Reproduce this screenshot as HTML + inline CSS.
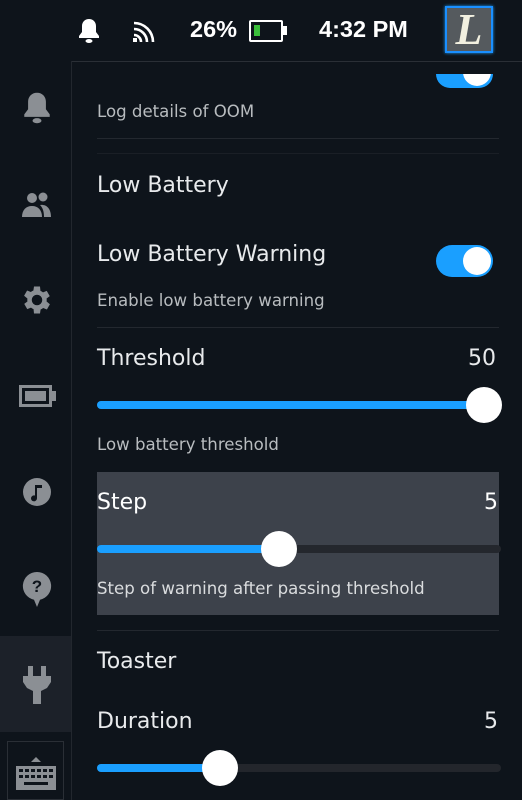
<!DOCTYPE html>
<html><head><meta charset="utf-8"><style>
*{margin:0;padding:0;box-sizing:border-box}
body{width:522px;height:800px;background:#0e141b;position:relative;overflow:hidden;font-family:"DejaVu Sans","Liberation Sans",sans-serif;color:#e6e8ea}
.a{position:absolute}
.t{font-size:22px;color:#e8eaec}
.d{font-size:16.6px;color:#b8bcbf}
.sep{position:absolute;left:97px;width:402px;height:1px;background:#23282f}
.track{position:absolute;left:97px;width:404px;height:8px;border-radius:4px;background:#23262c}
.fill{position:absolute;left:0;top:0;height:8px;border-radius:4px;background:#1a9fff}
.knob{position:absolute;width:36px;height:36px;border-radius:50%;background:#fff;top:-14px}
</style></head><body>
<svg class="a" style="left:78px;top:18px" width="22" height="26" viewBox="0 0 22 26"><path d="M11 1c-4 0-7 3-7 7v6l-3 4v2h20v-2l-3-4V8c0-4-3-7-7-7z" fill="#fff"/><ellipse cx="11" cy="23" rx="3.5" ry="2" fill="#fff"/></svg>
<svg class="a" style="left:133px;top:19px" width="25" height="24" viewBox="0 0 25 24"><g fill="none" stroke="#fff" stroke-width="2.6"><path d="M1 4a19 19 0 0 1 19 19"/><path d="M1 10a13 13 0 0 1 13 13"/><path d="M1 16a7 7 0 0 1 7 7"/></g><rect x="0" y="19" width="4" height="4" fill="#fff"/></svg>
<div class="a" style="left:190px;top:16px;font-size:23.5px;color:#fff;font-family:'Liberation Sans',sans-serif;font-weight:bold">26%</div>
<div class="a" style="left:249px;top:20px;width:34px;height:22px;border:2.5px solid #fff;border-radius:2px"><div style="position:absolute;left:3px;top:3px;width:6px;height:11px;background:#3bbf3b"></div></div>
<div class="a" style="left:283px;top:26px;width:4px;height:9px;background:#fff"></div>
<div class="a" style="left:319px;top:16px;font-size:23.5px;color:#fff;font-family:'Liberation Sans',sans-serif;font-weight:bold">4:32 PM</div>
<div class="a" style="left:445px;top:6px;width:48px;height:47px;background:#555a5e;border:2px solid #1a8fff;box-shadow:0 0 3px #1a9fff"><div style="font-family:'Liberation Serif',serif;font-size:44px;font-weight:bold;font-style:italic;color:#f2f0e0;text-align:center;line-height:44px">L</div></div>
<div class="a" style="left:72px;top:61px;width:450px;height:1px;background:#2a2f36"></div>
<div class="a" style="left:71px;top:61px;width:1px;height:739px;background:#22272e"></div>
<div class="a" style="left:0;top:636px;width:71px;height:96px;background:#1c2129"></div>
<div class="a" style="left:7px;top:741px;width:57px;height:59px;border:1px solid #2a2f36"></div>
<svg class="a" style="left:23px;top:91px" width="28" height="34" viewBox="0 0 22 26"><path d="M11 1c-4 0-7 3-7 7v6l-3 4v2h20v-2l-3-4V8c0-4-3-7-7-7z" fill="#8b8f94"/><ellipse cx="11" cy="23" rx="3.5" ry="2" fill="#8b8f94"/></svg>
<svg class="a" style="left:21px;top:190px" width="32" height="28" viewBox="0 0 32 28"><g fill="#8b8f94"><circle cx="11" cy="8" r="5"/><circle cx="22" cy="7" r="4.5"/><path d="M1 27c0-7 4-11 10-11s10 4 10 11z"/><path d="M19 15c6-1 11 3 11 12h-7c0-5-1-9-4-12z"/></g></svg>
<svg class="a" style="left:19px;top:282px" width="36" height="36" viewBox="0 0 24 24"><path fill="#8b8f94" d="M19.4 13a7.5 7.5 0 0 0 0-2l2.1-1.6-2-3.5-2.5 1a7 7 0 0 0-1.7-1L15 3h-4l-.4 2.7a7 7 0 0 0-1.7 1l-2.5-1-2 3.5L6.6 11a7.5 7.5 0 0 0 0 2l-2.1 1.6 2 3.5 2.5-1a7 7 0 0 0 1.7 1L11 21h4l.4-2.7a7 7 0 0 0 1.7-1l2.5 1 2-3.5zM13 15.5a3.5 3.5 0 1 1 0-7 3.5 3.5 0 0 1 0 7z" transform="translate(-1 0)"/></svg>
<div class="a" style="left:19px;top:385px;width:33px;height:22px;border:3px solid #8b8f94"><div style="margin:3px;height:10px;background:#8b8f94"></div></div>
<div class="a" style="left:52px;top:391px;width:4px;height:10px;background:#8b8f94"></div>
<svg class="a" style="left:22px;top:477px" width="30" height="30" viewBox="0 0 30 30"><circle cx="15" cy="15" r="14" fill="#8b8f94"/><path d="M13 8v10.5a3 3 0 1 0 2 2.8V11h5V8z" fill="#0e141b"/></svg>
<svg class="a" style="left:22px;top:571px" width="30" height="38" viewBox="0 0 30 38"><path d="M15 1a14 14 0 0 0-3 27.7L15 36l3-7.3A14 14 0 0 0 15 1z" fill="#8b8f94"/><text x="15" y="21" font-size="17" font-weight="bold" text-anchor="middle" fill="#0e141b" font-family="Liberation Sans">?</text></svg>
<svg class="a" style="left:23px;top:666px" width="28" height="38" viewBox="0 0 28 38"><g fill="#8b8f94"><rect x="5" y="0" width="5" height="10"/><rect x="18" y="0" width="5" height="10"/><path d="M0 10h28v6l-4 6-6 3v13h-8V25l-6-3-4-6z"/></g></svg>
<svg class="a" style="left:16px;top:756px" width="40" height="34" viewBox="0 0 40 34"><path d="M15 6l5-5 5 5z" fill="#8b8f94"/><rect x="0" y="10" width="40" height="24" fill="#8b8f94"/><g fill="#0e141b"><rect x="3" y="13" width="4" height="3"/><rect x="9" y="13" width="4" height="3"/><rect x="15" y="13" width="4" height="3"/><rect x="21" y="13" width="4" height="3"/><rect x="27" y="13" width="4" height="3"/><rect x="33" y="13" width="4" height="3"/><rect x="3" y="19" width="4" height="3"/><rect x="9" y="19" width="4" height="3"/><rect x="15" y="19" width="4" height="3"/><rect x="21" y="19" width="4" height="3"/><rect x="27" y="19" width="4" height="3"/><rect x="33" y="19" width="4" height="3"/><rect x="8" y="26" width="24" height="3"/></g></svg>
<div class="a" style="left:436px;top:62px;width:57px;height:26px;border-radius:0 0 14px 14px;background:#1a9fff;overflow:hidden;clip-path:inset(12px 0 0 0)"><div style="position:absolute;right:2px;top:-4px;width:28px;height:28px;border-radius:50%;background:#fff"></div></div>
<div class="a d" style="left:97px;top:102px">Log details of OOM</div>
<div class="sep" style="top:138px"></div>
<div class="sep" style="top:153px;background:#1a1f26"></div>
<div class="a t" style="left:97px;top:173px">Low Battery</div>
<div class="a t" style="left:97px;top:242px">Low Battery Warning</div>
<div class="a" style="left:436px;top:245px;width:57px;height:32px;border-radius:16px;background:#1a9fff"><div style="position:absolute;right:2px;top:2px;width:28px;height:28px;border-radius:50%;background:#fff"></div></div>
<div class="a d" style="left:97px;top:291px">Enable low battery warning</div>
<div class="sep" style="top:327px"></div>
<div class="a t" style="left:97px;top:346px">Threshold</div>
<div class="a t" style="left:468px;top:346px">50</div>
<div class="track" style="top:401px"><div class="fill" style="width:387px"></div><div class="knob" style="left:369px"></div></div>
<div class="a d" style="left:97px;top:435px">Low battery threshold</div>
<div class="a" style="left:97px;top:472px;width:402px;height:143px;background:#3d424b"></div>
<div class="a t" style="left:97px;top:490px;color:#fff">Step</div>
<div class="a t" style="left:484px;top:490px;color:#fff">5</div>
<div class="track" style="top:545px;background:#24272d"><div class="fill" style="width:182px"></div><div class="knob" style="left:164px"></div></div>
<div class="a d" style="left:97px;top:579px;color:#dadcde">Step of warning after passing threshold</div>
<div class="sep" style="top:630px"></div>
<div class="a t" style="left:97px;top:649px">Toaster</div>
<div class="a t" style="left:97px;top:709px">Duration</div>
<div class="a t" style="left:484px;top:709px">5</div>
<div class="track" style="top:764px"><div class="fill" style="width:123px"></div><div class="knob" style="left:105px"></div></div>
</body></html>
